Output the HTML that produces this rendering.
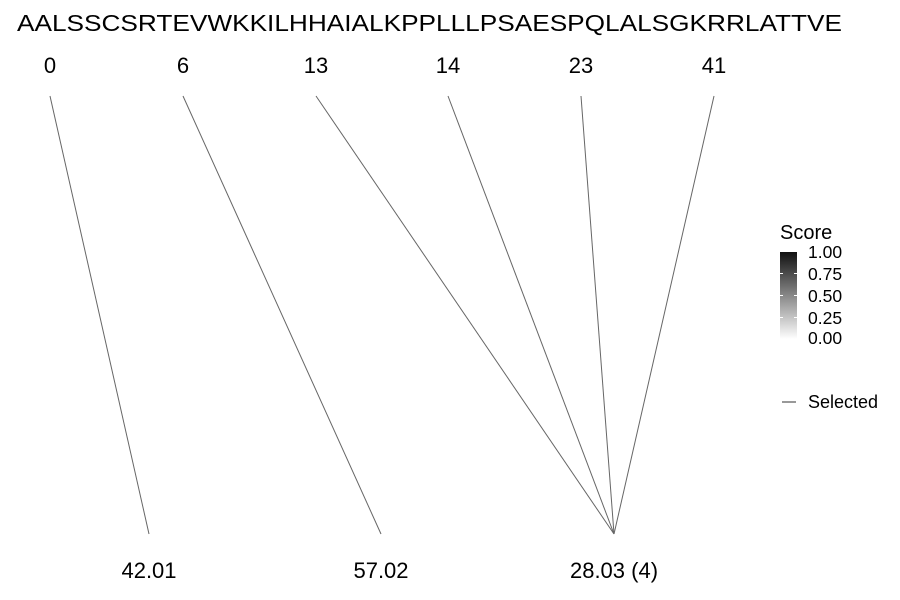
<!DOCTYPE html>
<html><head><style>body{margin:0;background:#fff}svg{display:block}text{font-family:"Liberation Sans",sans-serif;fill:#000}</style></head><body>
<svg width="900" height="600" viewBox="0 0 900 600">
<defs><linearGradient id="g" x1="0" y1="1" x2="0" y2="0"><stop offset="0" stop-color="#fff"/><stop offset="1" stop-color="#111"/></linearGradient></defs>
<text x="17" y="31" font-size="23" textLength="825" lengthAdjust="spacingAndGlyphs">AALSSCSRTEVWKKILHHAIALKPPLLLPSAESPQLALSGKRRLATTVE</text>
<g font-size="22" text-anchor="middle">
<text x="50" y="73">0</text><text x="183" y="73">6</text><text x="316" y="73">13</text><text x="448" y="73">14</text><text x="581" y="73">23</text><text x="714" y="73">41</text>
<text x="149" y="578">42.01</text><text x="381" y="578">57.02</text><text x="614" y="578">28.03 (4)</text>
</g>
<g stroke="#666" stroke-width="1" fill="none">
<line x1="50" y1="96" x2="149" y2="534"/><line x1="183" y1="96" x2="381" y2="534"/><line x1="316" y1="96" x2="614" y2="534"/><line x1="448" y1="96" x2="614" y2="534"/><line x1="581" y1="96" x2="614" y2="534"/><line x1="714" y1="96" x2="614" y2="534"/>
</g>
<text x="780" y="239" font-size="20">Score</text>
<rect x="780" y="252" width="17" height="87" fill="url(#g)"/>
<g stroke="#fff" stroke-width="1"><line x1="780" y1="273.5" x2="783" y2="273.5"/><line x1="794" y1="273.5" x2="797" y2="273.5"/><line x1="780" y1="295.5" x2="783" y2="295.5"/><line x1="794" y1="295.5" x2="797" y2="295.5"/><line x1="780" y1="317.5" x2="783" y2="317.5"/><line x1="794" y1="317.5" x2="797" y2="317.5"/></g>
<g font-size="17.5"><text x="808" y="258">1.00</text><text x="808" y="280">0.75</text><text x="808" y="302">0.50</text><text x="808" y="324">0.25</text><text x="808" y="344">0.00</text></g>
<line x1="782" y1="402" x2="796" y2="402" stroke="#333" stroke-width="1"/>
<text x="808" y="408" font-size="18">Selected</text>
</svg>
</body></html>
